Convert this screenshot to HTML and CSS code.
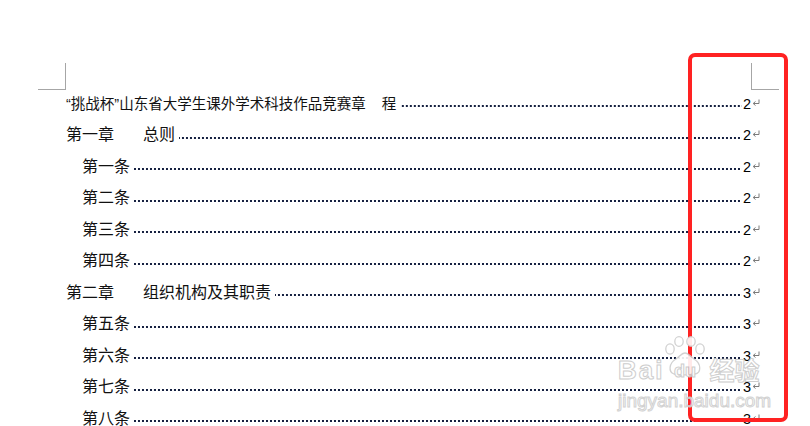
FILE: index.html
```html
<!DOCTYPE html>
<html lang="zh-CN">
<head>
    <meta charset="UTF-8">
    <title>目录</title>
    <link rel="stylesheet" href="styles.css">
</head>
<body>
    <div class="page">
        <div class="crop-mark crop-left"></div>
        <div class="crop-mark crop-right"></div>

        <div class="toc">
            <div class="toc-row title">
                <span class="label">“挑战杯”山东省大学生课外学术科技作品竞赛章<span class="gap"></span>程</span>
                <span class="leader"></span>
                <span class="num">2</span>
                <svg class="mark" width="8" height="7" viewBox="0 0 8 7"><path d="M7 0.5V4.5H1.5M3.5 2.5L1.2 4.5L3.5 6.5" fill="none" stroke="#7a7a7a" stroke-width="1"/></svg>
            </div>
            <div class="toc-row">
                <span class="label">第一章<span class="tab"></span>总则</span>
                <span class="leader"></span>
                <span class="num">2</span>
                <svg class="mark" width="8" height="7" viewBox="0 0 8 7"><path d="M7 0.5V4.5H1.5M3.5 2.5L1.2 4.5L3.5 6.5" fill="none" stroke="#7a7a7a" stroke-width="1"/></svg>
            </div>
            <div class="toc-row article">
                <span class="label">第一条</span>
                <span class="leader"></span>
                <span class="num">2</span>
                <svg class="mark" width="8" height="7" viewBox="0 0 8 7"><path d="M7 0.5V4.5H1.5M3.5 2.5L1.2 4.5L3.5 6.5" fill="none" stroke="#7a7a7a" stroke-width="1"/></svg>
            </div>
            <div class="toc-row article">
                <span class="label">第二条</span>
                <span class="leader"></span>
                <span class="num">2</span>
                <svg class="mark" width="8" height="7" viewBox="0 0 8 7"><path d="M7 0.5V4.5H1.5M3.5 2.5L1.2 4.5L3.5 6.5" fill="none" stroke="#7a7a7a" stroke-width="1"/></svg>
            </div>
            <div class="toc-row article">
                <span class="label">第三条</span>
                <span class="leader"></span>
                <span class="num">2</span>
                <svg class="mark" width="8" height="7" viewBox="0 0 8 7"><path d="M7 0.5V4.5H1.5M3.5 2.5L1.2 4.5L3.5 6.5" fill="none" stroke="#7a7a7a" stroke-width="1"/></svg>
            </div>
            <div class="toc-row article">
                <span class="label">第四条</span>
                <span class="leader"></span>
                <span class="num">2</span>
                <svg class="mark" width="8" height="7" viewBox="0 0 8 7"><path d="M7 0.5V4.5H1.5M3.5 2.5L1.2 4.5L3.5 6.5" fill="none" stroke="#7a7a7a" stroke-width="1"/></svg>
            </div>
            <div class="toc-row">
                <span class="label">第二章<span class="tab"></span>组织机构及其职责</span>
                <span class="leader"></span>
                <span class="num">3</span>
                <svg class="mark" width="8" height="7" viewBox="0 0 8 7"><path d="M7 0.5V4.5H1.5M3.5 2.5L1.2 4.5L3.5 6.5" fill="none" stroke="#7a7a7a" stroke-width="1"/></svg>
            </div>
            <div class="toc-row article">
                <span class="label">第五条</span>
                <span class="leader"></span>
                <span class="num">3</span>
                <svg class="mark" width="8" height="7" viewBox="0 0 8 7"><path d="M7 0.5V4.5H1.5M3.5 2.5L1.2 4.5L3.5 6.5" fill="none" stroke="#7a7a7a" stroke-width="1"/></svg>
            </div>
            <div class="toc-row article">
                <span class="label">第六条</span>
                <span class="leader"></span>
                <span class="num">3</span>
                <svg class="mark" width="8" height="7" viewBox="0 0 8 7"><path d="M7 0.5V4.5H1.5M3.5 2.5L1.2 4.5L3.5 6.5" fill="none" stroke="#7a7a7a" stroke-width="1"/></svg>
            </div>
            <div class="toc-row article">
                <span class="label">第七条</span>
                <span class="leader"></span>
                <span class="num">3</span>
                <svg class="mark" width="8" height="7" viewBox="0 0 8 7"><path d="M7 0.5V4.5H1.5M3.5 2.5L1.2 4.5L3.5 6.5" fill="none" stroke="#7a7a7a" stroke-width="1"/></svg>
            </div>
            <div class="toc-row article">
                <span class="label">第八条</span>
                <span class="leader"></span>
                <span class="num">3</span>
                <svg class="mark" width="8" height="7" viewBox="0 0 8 7"><path d="M7 0.5V4.5H1.5M3.5 2.5L1.2 4.5L3.5 6.5" fill="none" stroke="#7a7a7a" stroke-width="1"/></svg>
            </div>
        </div>

        <div class="highlight"></div>

        <div class="watermark">
            <div class="wm-logo">
                <span class="wm-bai">Bai</span>
                <svg class="wm-paw" width="44" height="46" viewBox="0 0 44 46">
                    <g fill="#fff" stroke="#cdcdcd" stroke-width="1.3">
                        <ellipse cx="6" cy="13" rx="4.2" ry="5.2"/>
                        <ellipse cx="15" cy="5.5" rx="4.2" ry="4.8"/>
                        <ellipse cx="27" cy="5.5" rx="4.2" ry="4.8"/>
                        <ellipse cx="36" cy="13" rx="4.2" ry="5.2"/>
                        <path d="M10 38 C4 36 5 27 12 23 C16 20 18 17 21 17 C24 17 26 20 30 23 C38 28 37 37 31 38 C25 39 16 39 10 38 Z"/>
                    </g>
                    <text x="10" y="41" class="wm-du">du</text>
                </svg>
                <span class="wm-jy">经验</span>
            </div>
            <div class="wm-url">jingyan.baidu.com</div>
        </div>
    </div>
</body>
</html>
```

FILE: styles.css
```css
html, body {
    margin: 0;
    padding: 0;
    background-color: #ffffff;
    overflow: hidden;
}

.page {
    position: relative;
    width: 810px;
    height: 426px;
    overflow: hidden;
    font-family: "Liberation Sans", "Noto Sans CJK SC", sans-serif;
    color: #111111;
}

.crop-mark {
    position: absolute;
    top: 63px;
    width: 28px;
    height: 27px;
    box-sizing: border-box;
    border-bottom: 1px solid #a6a6a6;
}

.crop-left {
    left: 38px;
    border-right: 1px solid #a6a6a6;
}

.crop-right {
    left: 751px;
    border-left: 1px solid #a6a6a6;
}

.toc {
    display: flex;
    flex-direction: column;
    padding: 88px 50px 0 66px;
}

.toc-row {
    display: flex;
    align-items: center;
    height: 31.5px;
    font-size: 16px;
}

.toc-row.article {
    padding-left: 16px;
}

.toc-row.title {
    font-size: 14.5px;
}

.label {
    white-space: nowrap;
    line-height: 1;
}

.gap {
    display: inline-block;
    width: 16px;
}

.tab {
    display: inline-block;
    width: 29px;
}

.leader {
    flex: 1;
    height: 2px;
    margin: 5px 1px 0 4px;
    background-image: linear-gradient(to right, #152040 2px, transparent 2px);
    background-size: 4px 2px;
    background-repeat: repeat-x;
    background-position: right top;
}

.num {
    font-size: 14.5px;
    line-height: 1;
    width: 8px;
    color: #000000;
}

.mark {
    display: block;
    margin: 0 0 3px 1px;
}

.highlight {
    position: absolute;
    left: 688px;
    top: 53px;
    width: 100px;
    height: 369px;
    box-sizing: border-box;
    border: 4px solid #ff2222;
    border-radius: 7px;
}

.watermark {
    position: absolute;
    left: 618px;
    top: 335px;
    width: 152px;
    display: flex;
    flex-direction: column;
    opacity: 0.9;
}

.wm-logo {
    display: flex;
    align-items: flex-end;
    height: 47px;
}

.wm-bai {
    font-family: "Liberation Sans", sans-serif;
    font-weight: bold;
    font-size: 26px;
    line-height: 1;
    letter-spacing: 2px;
    color: #ffffff;
    -webkit-text-stroke: 1px #c9c9c9;
    margin-bottom: -1px;
}

.wm-paw {
    display: block;
    margin-left: 0;
}

.wm-du {
    font-family: "Liberation Sans", sans-serif;
    font-weight: bold;
    font-size: 18px;
    fill: #ffffff;
    stroke: #c9c9c9;
    stroke-width: 1;
}

.wm-jy {
    font-family: "Noto Sans CJK SC", sans-serif;
    font-weight: bold;
    font-size: 25px;
    line-height: 1;
    color: #ffffff;
    -webkit-text-stroke: 1px #c9c9c9;
    margin-left: 1px;
}

.wm-url {
    font-family: "Liberation Sans", sans-serif;
    font-size: 19px;
    line-height: 1;
    margin-top: 9px;
    color: #ffffff;
    -webkit-text-stroke: 1px #cdcdcd;
}
```
